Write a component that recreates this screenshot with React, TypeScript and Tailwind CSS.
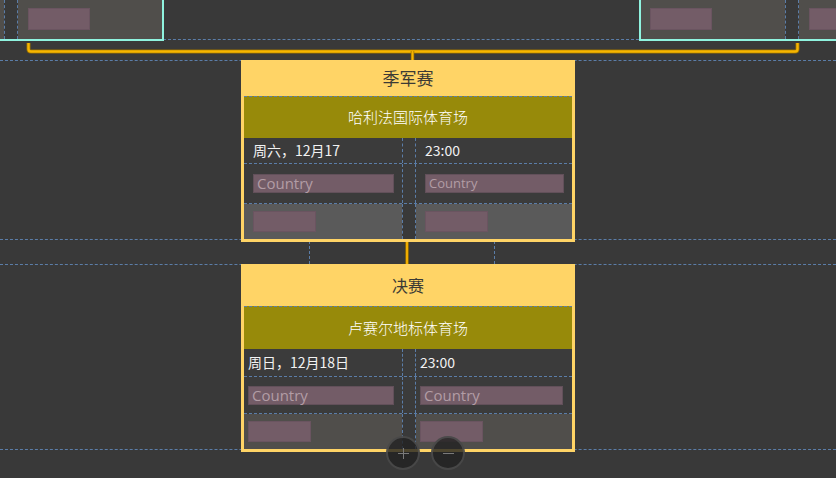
import React from 'react';

const CJK = "font-['Noto_Sans_CJK_SC','Noto_Sans',sans-serif]";

type CardProps = {
  top: string;
  title: string;
  stadium: string;
  date: string;
  time: string;
  titleH: string;
  titleSize: string;
  oliveH: string;
  dateH: string;
  countryH: string;
  inset: string;
  leftInput: string;
  rightInput: string;
  rightText: string;
  bottomBg: string;
};

const Guide = ({ className }: { className: string }) => (
  <div className={`absolute border-dashed border-[#5b7da8] ${className}`} />
);

const Pink = () => <div className="h-[21px] w-[63px] shrink-0 bg-[#735c67] border border-[#6a5460]" />;

const MatchCard = (p: CardProps) => (
  <div className={`absolute left-[241px] w-[334px] bg-[#ffd466] px-[3px] pb-[3px] ${p.top}`}>
    <div className={`flex items-center justify-center text-[#3b3a35] ${CJK} ${p.titleSize} ${p.titleH}`}>
      {p.title}
    </div>
    <div className={`flex items-center justify-center bg-[#978a0a] border-t border-dashed border-[#5b7da8] text-[15px] font-light text-white ${CJK} ${p.oliveH}`}>
      {p.stadium}
    </div>
    {/* date row */}
    <div className={`grid grid-cols-[158px_14px_156px] bg-[#3b3b3b] border-b border-dashed border-[#5b7da8] text-[14px] text-[#f2f2f2] ${CJK} ${p.dateH}`}>
      <div className={`flex items-center ${p.inset}`}>{p.date}</div>
      <div className="border-x border-dashed border-[#5b7da8]" />
      <div className={`flex items-center ${p.inset}`}>{p.time}</div>
    </div>
    {/* country row */}
    <div className={`grid grid-cols-[158px_14px_156px] bg-[#3b3b3b] border-b border-dashed border-[#5b7da8] font-['Open_Sans','Noto_Sans',sans-serif] text-[#b29da5] ${p.countryH}`}>
      <div className={`flex items-center ${p.inset}`}>
        <div className={`flex h-[19px] items-center bg-[#735c67] border border-[#62505a] pl-[3px] text-[15px] leading-none ${p.leftInput}`}>Country</div>
      </div>
      <div className="border-x border-dashed border-[#5b7da8]" />
      <div className={`flex items-center ${p.inset}`}>
        <div className={`flex h-[19px] items-center bg-[#735c67] border border-[#62505a] pl-[3px] leading-none ${p.rightInput} ${p.rightText}`}>Country</div>
      </div>
    </div>
    {/* bottom row */}
    <div className="grid h-[35px] grid-cols-[158px_14px_156px]">
      <div className={`flex items-center ${p.inset} ${p.bottomBg}`}><Pink /></div>
      <div className="bg-[#393939] border-x border-dashed border-[#5b7da8]" />
      <div className={`flex items-center ${p.inset} ${p.bottomBg}`}><Pink /></div>
    </div>
  </div>
);

export default function App() {
  return (
    <div className="relative h-[478px] w-[836px] overflow-hidden bg-[#393939]">
      {/* guide lines */}
      <Guide className="left-[163px] top-[39px] w-[476px] border-t" />
      <Guide className="left-0 top-[60px] w-[836px] border-t" />
      <Guide className="left-0 top-[239px] w-[836px] border-t" />
      <Guide className="left-0 top-[264px] w-[836px] border-t" />
      <Guide className="left-0 top-[449px] w-[836px] border-t" />
      <Guide className="left-[309px] top-[241px] h-[23px] border-l" />
      <Guide className="left-[494px] top-[241px] h-[23px] border-l" />

      {/* previous round cards (cropped, selected) */}
      <div className="absolute left-0 top-0 flex h-[41px] w-[164px] border-r-2 border-b-2 border-[#8ff3df]">
        <div className="w-[4px] shrink-0 bg-[#504e4b]" />
        <div className="w-[14px] shrink-0 bg-[#393939] border-x border-dashed border-[#5b7da8]" />
        <div className="flex-1 bg-[#504e4b] pl-[10px] pt-[8px]">
          <div className="h-[22px] w-[62px] bg-[#735c67] border border-[#6a5460]" />
        </div>
      </div>
      <div className="absolute left-[639px] top-0 flex h-[41px] w-[260px] border-l-2 border-b-2 border-[#8ff3df]">
        <div className="w-[144px] shrink-0 bg-[#504e4b] pl-[9px] pt-[8px]">
          <div className="h-[22px] w-[62px] bg-[#735c67] border border-[#6a5460]" />
        </div>
        <div className="w-[14px] shrink-0 bg-[#393939] border-x border-dashed border-[#5b7da8]" />
        <div className="flex-1 bg-[#504e4b] pl-[10px] pt-[8px]">
          <div className="h-[22px] w-[62px] bg-[#735c67] border border-[#6a5460]" />
        </div>
      </div>

      {/* connectors */}
      <svg className="absolute left-0 top-0" width="836" height="478">
        <path d="M28.5 43 V49 Q28.5 51.5 31 51.5 H795 Q797.5 51.5 797.5 49 V43" fill="none" stroke="#9a7000" strokeWidth="4" />
        <path d="M28.5 43 V49 Q28.5 51.5 31 51.5 H795 Q797.5 51.5 797.5 49 V43" fill="none" stroke="#f6b500" strokeWidth="2.4" />
        <path d="M412.5 51 V60" stroke="#9a7000" strokeWidth="3.5" />
        <path d="M412.5 51 V60" stroke="#f6b500" strokeWidth="2" />
        <path d="M407 241 V264" stroke="#9a7000" strokeWidth="3.5" />
        <path d="M407 241 V264" stroke="#f0ad00" strokeWidth="2" />
      </svg>

      <MatchCard
        top="top-[60px]"
        title="季军赛"
        stadium="哈利法国际体育场"
        date="周六，12月17"
        time="23:00"
        titleH="h-[36px]"
        titleSize="text-[17px]"
        oliveH="h-[42px]"
        dateH="h-[26px]"
        countryH="h-[40px]"
        inset="pl-[9px]"
        leftInput="w-[141px]"
        rightInput="w-[139px]"
        rightText="text-[13px]"
        bottomBg="bg-[#5a5a5a]"
      />
      <MatchCard
        top="top-[264px]"
        title="决赛"
        stadium="卢赛尔地标体育场"
        date="周日，12月18日"
        time="23:00"
        titleH="h-[42px]"
        titleSize="text-[16px]"
        oliveH="h-[43px]"
        dateH="h-[28px]"
        countryH="h-[37px]"
        inset="pl-[4px]"
        leftInput="w-[146px]"
        rightInput="w-[143px]"
        rightText="text-[15px]"
        bottomBg="bg-[#504e4b]"
      />

      {/* zoom buttons */}
      <div className="absolute left-[386px] top-[436px] flex gap-[11px]">
        <button className="relative flex h-[34px] w-[34px] items-center justify-center rounded-full border-2 border-[#555555]/70 bg-[#222222]/80">
          <span className="absolute h-px w-[11px] bg-[#7a7a7a]" />
          <span className="absolute h-[11px] w-px bg-[#7a7a7a]" />
        </button>
        <button className="relative flex h-[34px] w-[34px] items-center justify-center rounded-full border-2 border-[#555555]/70 bg-[#222222]/80">
          <span className="absolute h-px w-[11px] bg-[#7a7a7a]" />
        </button>
      </div>
    </div>
  );
}
